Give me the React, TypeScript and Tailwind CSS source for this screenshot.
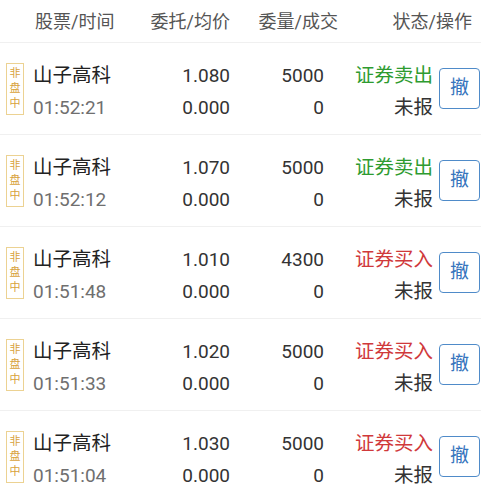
import React from 'react';

type Order = {
  name: string;
  time: string;
  price: string;
  avg: string;
  qty: string;
  filled: string;
  side: '证券卖出' | '证券买入';
  status: string;
};

const orders: Order[] = [
  { name: '山子高科', time: '01:52:21', price: '1.080', avg: '0.000', qty: '5000', filled: '0', side: '证券卖出', status: '未报' },
  { name: '山子高科', time: '01:52:12', price: '1.070', avg: '0.000', qty: '5000', filled: '0', side: '证券卖出', status: '未报' },
  { name: '山子高科', time: '01:51:48', price: '1.010', avg: '0.000', qty: '4300', filled: '0', side: '证券买入', status: '未报' },
  { name: '山子高科', time: '01:51:33', price: '1.020', avg: '0.000', qty: '5000', filled: '0', side: '证券买入', status: '未报' },
  { name: '山子高科', time: '01:51:04', price: '1.030', avg: '0.000', qty: '5000', filled: '0', side: '证券买入', status: '未报' },
];

function OrderRow({ order }: { order: Order }) {
  const sideColor = order.side === '证券卖出' ? 'text-[#2e9b30]' : 'text-[#d0393b]';
  return (
    <div className="flex h-[92px] items-center border-b border-[#f0f0f0]">
      <div className="ml-[6px] flex h-[52px] w-[18px] flex-col items-center justify-center border border-[#ecd292] text-[11px] leading-[15px] text-[#d8a23a]">
        <span>非</span>
        <span>盘</span>
        <span>中</span>
      </div>
      <div className="ml-[9px] w-[107px] pt-[6px] leading-[32px]">
        <div className="text-[19.5px] text-[#222]">{order.name}</div>
        <div className="text-[19px] text-[#6f6f6f]">{order.time}</div>
      </div>
      <div className="w-[90px] pt-[6px] text-right text-[19px] leading-[32px] text-[#333]">
        <div>{order.price}</div>
        <div>{order.avg}</div>
      </div>
      <div className="w-[94px] pt-[6px] text-right text-[19px] leading-[32px] text-[#333]">
        <div>{order.qty}</div>
        <div>{order.filled}</div>
      </div>
      <div className="w-[109px] pt-[6px] text-right text-[19.5px] leading-[32px]">
        <div className={sideColor}>{order.side}</div>
        <div className="text-[#333]">{order.status}</div>
      </div>
      <button className="ml-[6px] flex h-[41px] w-[41px] items-center justify-center rounded-[4px] border border-[#4f8bc9] bg-white text-[19px] text-[#3674bd]">
        撤
      </button>
    </div>
  );
}

export default function App() {
  return (
    <div
      className="h-[500px] w-[481px] overflow-hidden bg-white"
      style={{ fontFamily: "Roboto, 'Noto Sans CJK SC', sans-serif" }}
    >
      <div className="flex h-[43px] items-center border-b border-[#f0f0f0] text-[18px] text-[#555]">
        <div className="w-[140px] pl-[35px]">股票/时间</div>
        <div className="w-[90px] text-right">委托/均价</div>
        <div className="w-[108px] text-right">委量/成交</div>
        <div className="w-[134px] text-right">状态/操作</div>
      </div>
      {orders.map((o, i) => (
        <OrderRow key={i} order={o} />
      ))}
    </div>
  );
}
